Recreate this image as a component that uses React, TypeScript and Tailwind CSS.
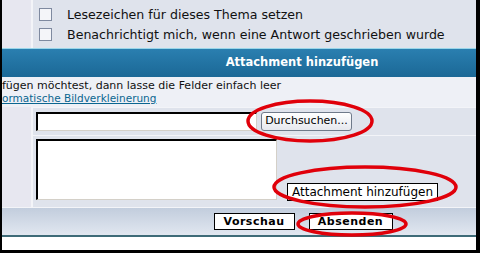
import React from "react";

const font = { fontFamily: '"DejaVu Sans", Verdana, sans-serif' };

function Box() {
  return <span className="inline-block w-[13px] h-[13px] border border-[#7f8aa0] bg-[#f4f5f9] shrink-0" />;
}

export default function App() {
  return (
    <div
      className="relative w-[480px] h-[253px] overflow-hidden bg-white border-l-2 border-r-[4px] border-b-[3px] border-black flex flex-col"
      style={font}
    >
      {/* Optionen */}
      <div className="flex h-[48px]">
        <div className="w-[31px] bg-[#e7e7f0] border-r-2 border-[#f3f4f8]" />
        <div className="flex-1 bg-[#dfe3ec] pl-[6px] pt-[8px] flex flex-col gap-[7px] text-[12.6px] text-[#111]">
          <div className="flex items-center gap-[15px] leading-[13px]">
            <Box />
            <span>Lesezeichen für dieses Thema setzen</span>
          </div>
          <div className="flex items-center gap-[15px] leading-[13px]">
            <Box />
            <span>Benachrichtigt mich, wenn eine Antwort geschrieben wurde</span>
          </div>
        </div>
      </div>

      {/* Kopfzeile */}
      <div className="h-[29px] border-t border-[#9ad6ea] bg-gradient-to-b from-[#2a7fb0] to-[#1b6896] flex items-center justify-center pl-[126px]">
        <span className="text-white font-bold text-[11.5px]">Attachment hinzufügen</span>
      </div>

      {/* Hinweis */}
      <div className="h-[30px] bg-[#eef0f6] flex flex-col justify-center text-[11px] leading-[13px] text-[#111]">
        <span>fügen möchtest, dann lasse die Felder einfach leer</span>
        <span className="text-[#0a6690] underline w-fit text-[10.5px]">ormatische Bildverkleinerung</span>
      </div>

      {/* Formular */}
      <div className="flex h-[100px]">
        <div className="w-[31px] bg-[#e7e7f0] border-r-2 border-[#f3f4f8]" />
        <div className="flex-1 flex flex-col bg-[#dfe3ec]">
          <div className="h-[29px] flex items-center pl-[3px] gap-[4px] border-t border-[#f3f4f8] border-b border-b-[#f3f4f8]">
            <div className="w-[221px] h-[19px] bg-white border-t-2 border-l-2 border-black border-r border-b border-r-[#d4d0c8] border-b-[#d4d0c8]" />
            <button className="w-[91px] h-[19px] rounded-[3px] border border-[#6f7a8a] bg-gradient-to-b from-white to-[#e6e8ee] text-[11px] text-black">
              Durchsuchen...
            </button>
          </div>
          <div className="flex-1 flex pl-[3px] pt-[3px]">
            <div className="w-[241px] h-[61px] bg-white border-t-2 border-l-2 border-black border-r border-b border-r-[#d4d0c8] border-b-[#d4d0c8]" />
            <div className="flex-1 flex flex-col items-start pl-[10px] pt-[44px]">
              <button className="w-[151px] h-[18px] border border-black bg-white text-[12px] leading-none text-black">
                Attachment hinzufügen
              </button>
            </div>
          </div>
        </div>
      </div>

      {/* Knöpfe */}
      <div className="h-[30px] border-t border-[#f3f4f8] border-b-2 border-b-[#3e6b78] bg-gradient-to-b from-[#c2cddd] to-[#e1e7f0] flex items-center justify-center gap-[14px] pl-[128px]">
        <button className="w-[81px] h-[17px] border border-black bg-white text-[11px] font-bold tracking-[0.5px] leading-none">
          Vorschau
        </button>
        <button className="w-[84px] h-[17px] border border-black bg-white text-[11px] font-bold tracking-[0.5px] leading-none">
          Absenden
        </button>
      </div>
      <div className="flex-1 bg-white" />

      {/* Markierungen */}
      <svg className="absolute left-[-2px] top-0 pointer-events-none" width="480" height="253">
        <ellipse cx="310" cy="121" rx="62" ry="20" fill="none" stroke="#e0000a" strokeWidth="3.5" />
        <ellipse cx="365" cy="187" rx="91" ry="20" fill="none" stroke="#e0000a" strokeWidth="3.5" />
        <ellipse cx="352" cy="224" rx="54" ry="11" fill="none" stroke="#e0000a" strokeWidth="3.5" />
      </svg>
    </div>
  );
}
